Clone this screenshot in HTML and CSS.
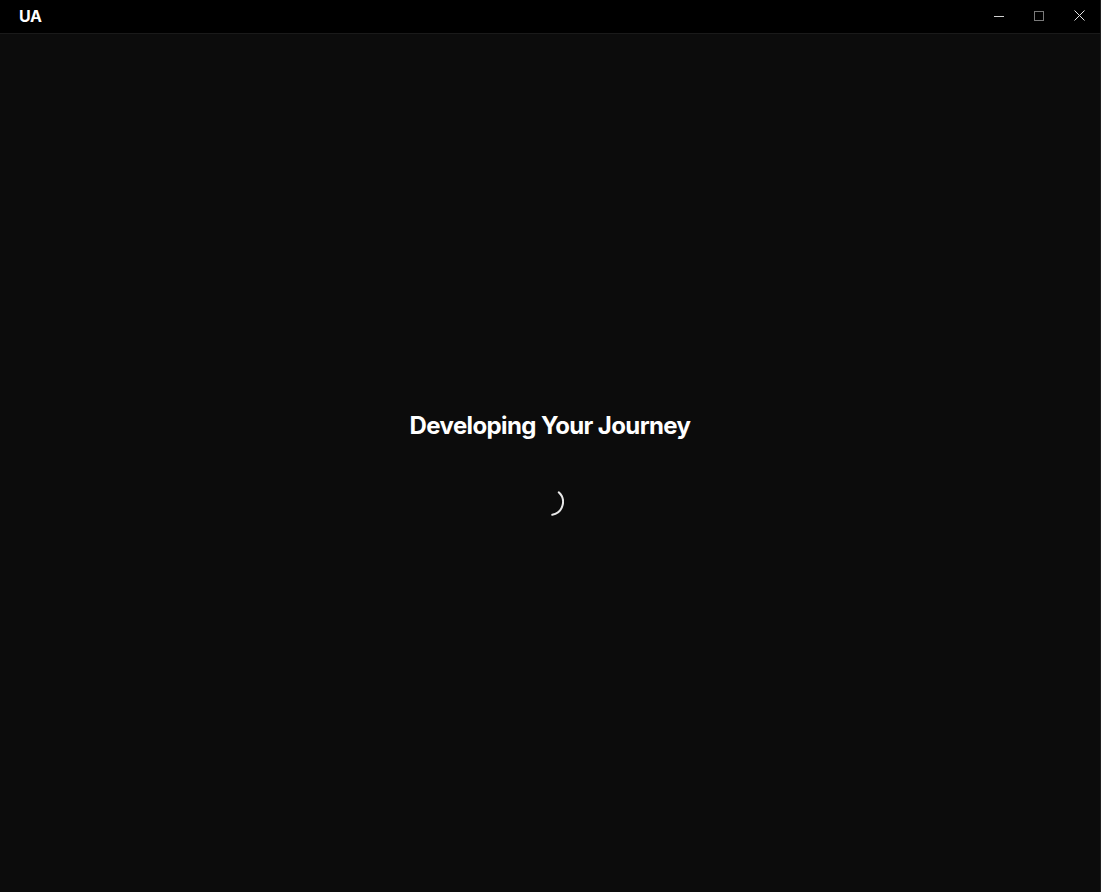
FILE: index.html
```html
<!DOCTYPE html>
<html lang="en">
<head>
<meta charset="utf-8">
<title>UA</title>
<link rel="stylesheet" href="styles.css">
</head>
<body>
<div class="window">
  <header class="titlebar">
    <div class="brand">UA</div>
    <div class="controls">
      <button class="ctrl" aria-label="Minimize">
        <svg width="10" height="10" viewBox="0 0 10 10"><path d="M0 5.5H10" stroke="#d0d0d0" stroke-width="1"/></svg>
      </button>
      <button class="ctrl" aria-label="Maximize">
        <svg width="10" height="10" viewBox="0 0 10 10"><rect x="0.5" y="0.5" width="9" height="9" fill="none" stroke="#7a7a7a" stroke-width="1"/></svg>
      </button>
      <button class="ctrl" aria-label="Close">
        <svg width="11" height="11" viewBox="0 0 11 11"><path d="M0.5 0.5L10.5 10.5M10.5 0.5L0.5 10.5" stroke="#e6e6e6" stroke-width="1"/></svg>
      </button>
    </div>
  </header>
  <main class="content">
    <h1 class="heading">Developing Your Journey</h1>
    <svg class="spinner" width="28" height="28" viewBox="0 0 28 28">
      <path d="M22.7 4.34 A13 13 0 0 1 16.26 26.8" fill="none" stroke="#e8e8e8" stroke-width="2" stroke-linecap="round"/>
    </svg>
  </main>
</div>
</body>
</html>
```
FILE: styles.css
```css
* { box-sizing: border-box; }
html, body {
  margin: 0;
  padding: 0;
  height: 100%;
  background: #0c0c0c;
  font-family: "Inter", "Liberation Sans", sans-serif;
  color: #fff;
}
.window {
  height: 100%;
  display: flex;
  flex-direction: column;
  border-right: 1px solid #1f1f1f;
}
.titlebar {
  height: 34px;
  flex: 0 0 34px;
  background: #000;
  border-bottom: 1px solid #1a1a1a;
  display: flex;
  align-items: center;
  justify-content: space-between;
  padding-left: 19px;
}
.brand {
  font-weight: 700;
  font-size: 16px;
  line-height: 20px;
  letter-spacing: -0.3px;
  margin-top: -1px;
}
.controls {
  display: flex;
  height: 33px;
  margin-right: 1px;
}
.ctrl {
  width: 40px;
  height: 33px;
  background: transparent;
  border: none;
  padding: 0;
  display: flex;
  align-items: center;
  justify-content: center;
  margin-top: -1px;
}
.ctrl svg { display: block; }
.content {
  flex: 1;
  display: flex;
  flex-direction: column;
  align-items: center;
  justify-content: center;
}
.heading {
  margin: 0 0 46px;
  font-size: 24px;
  line-height: 32px;
  font-weight: 700;
  letter-spacing: -0.62px;
}
.spinner { display: block; }
```
